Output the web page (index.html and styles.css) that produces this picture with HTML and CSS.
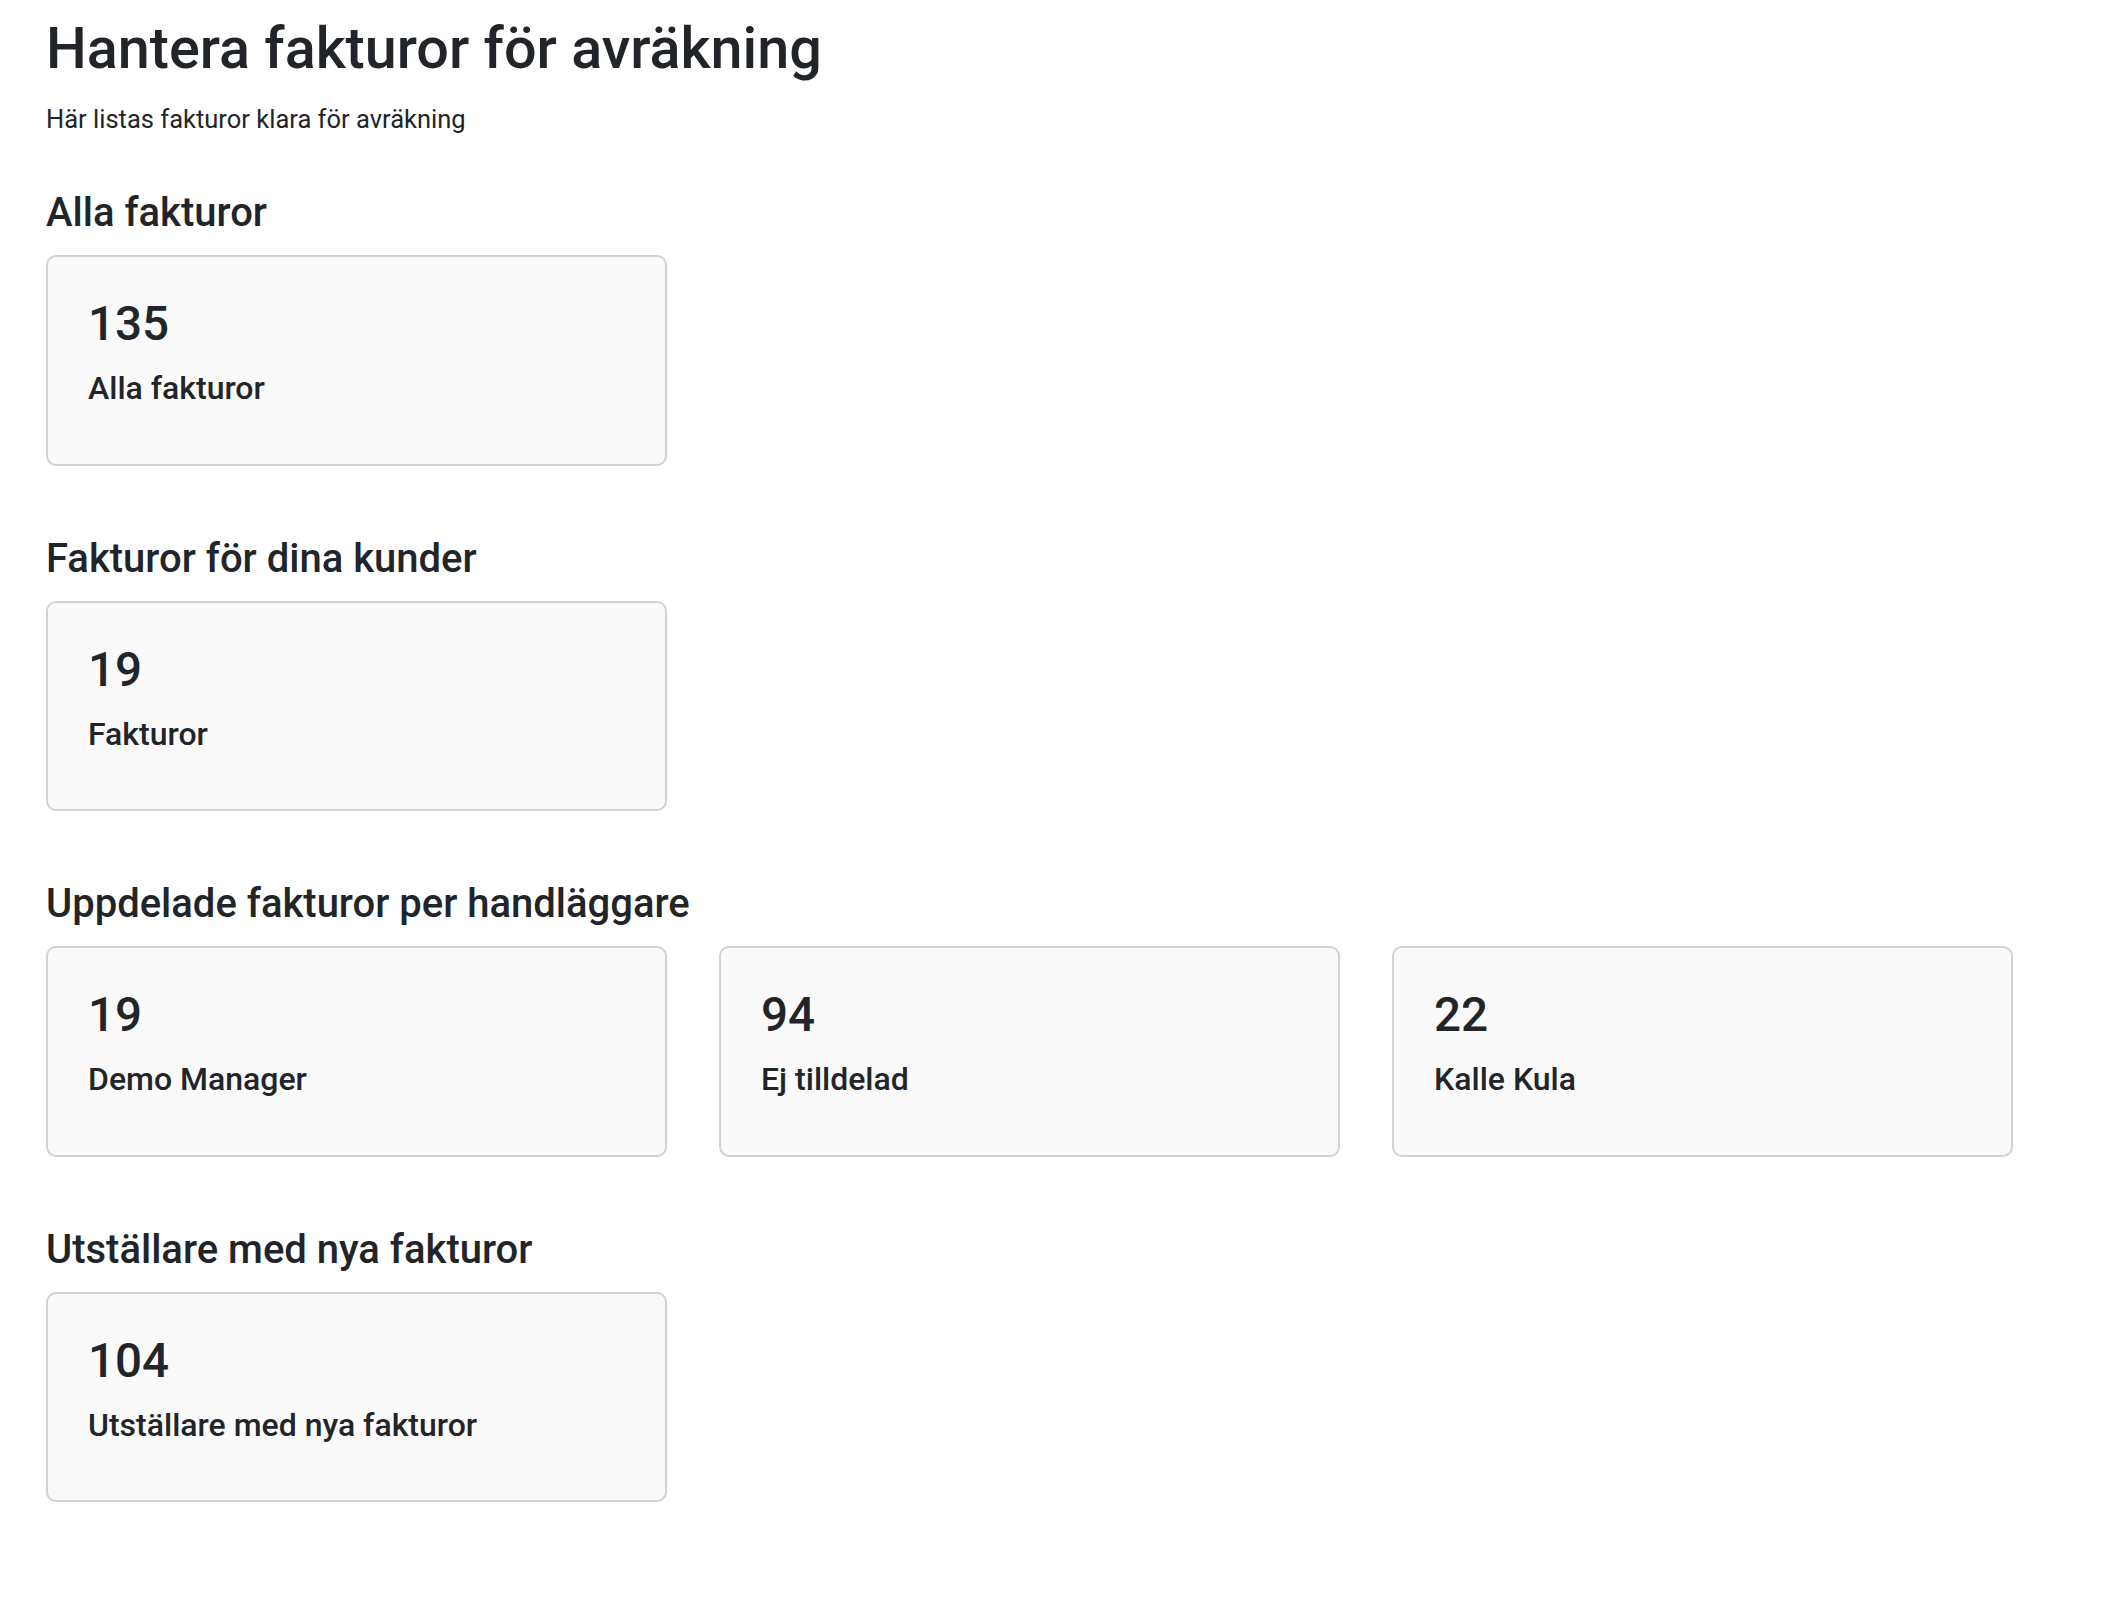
FILE: index.html
```html
<!DOCTYPE html>
<html lang="sv">
<head>
<meta charset="utf-8">
<title>Hantera fakturor för avräkning</title>
<link rel="stylesheet" href="styles.css">
</head>
<body>
<main class="page">
  <header class="page-header">
    <h1 class="page-title">Hantera fakturor för avräkning</h1>
    <p class="page-lead">Här listas fakturor klara för avräkning</p>
  </header>

  <section class="section">
    <h3 class="section-title">Alla fakturor</h3>
    <div class="cards">
      <div class="stat-card">
        <div class="stat-value">135</div>
        <div class="stat-label">Alla fakturor</div>
      </div>
    </div>
  </section>

  <section class="section">
    <h3 class="section-title">Fakturor för dina kunder</h3>
    <div class="cards">
      <div class="stat-card">
        <div class="stat-value">19</div>
        <div class="stat-label">Fakturor</div>
      </div>
    </div>
  </section>

  <section class="section">
    <h3 class="section-title">Uppdelade fakturor per handläggare</h3>
    <div class="cards">
      <div class="stat-card">
        <div class="stat-value">19</div>
        <div class="stat-label">Demo Manager</div>
      </div>
      <div class="stat-card">
        <div class="stat-value">94</div>
        <div class="stat-label">Ej tilldelad</div>
      </div>
      <div class="stat-card">
        <div class="stat-value">22</div>
        <div class="stat-label">Kalle Kula</div>
      </div>
    </div>
  </section>

  <section class="section">
    <h3 class="section-title">Utställare med nya fakturor</h3>
    <div class="cards">
      <div class="stat-card">
        <div class="stat-value">104</div>
        <div class="stat-label">Utställare med nya fakturor</div>
      </div>
    </div>
  </section>
</main>
</body>
</html>
```
FILE: styles.css
```css
* {
  box-sizing: border-box;
}

html, body {
  margin: 0;
  padding: 0;
  background: #ffffff;
}

body {
  font-family: Roboto, "Liberation Sans", Arial, sans-serif;
  color: #212529;
}

.page {
  padding: 14px 46px 60px 46px;
}

.page-title {
  margin: 0;
  font-size: 57.5px;
  font-weight: 500;
  line-height: 1.2;
}

.page-lead {
  margin: 17px 0 0 0;
  font-size: 25.5px;
  font-weight: 400;
  line-height: 1.5;
}

.section {
  margin-top: 69px;
}

.page-header + .section {
  margin-top: 51px;
}

.section-title {
  margin: 0 0 18px 0;
  font-size: 40px;
  font-weight: 500;
  line-height: 1.2;
}

.cards {
  display: grid;
  grid-template-columns: repeat(3, 621px);
  column-gap: 52px;
}

.stat-card {
  background: #fafafa;
  border: 2px solid #d2d2d2;
  border-radius: 10px;
  padding: 39px 40px 56px 40px;
}

.stat-value {
  font-size: 47.6px;
  font-weight: 500;
  line-height: 1.2;
  margin-bottom: 16px;
}

.stat-label {
  font-size: 32px;
  font-weight: 500;
  line-height: 1.2;
}
```
